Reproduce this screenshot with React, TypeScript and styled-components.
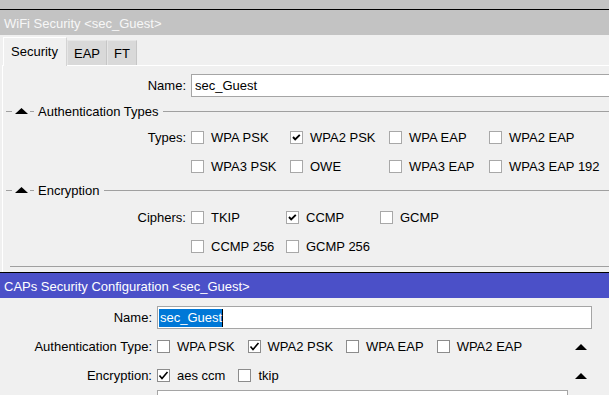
import React from "react";
import styled, { createGlobalStyle } from "styled-components";

const GlobalStyle = createGlobalStyle`
  html, body {
    margin: 0;
    padding: 0;
  }
  body {
    background: #f0f0f0;
    font-family: "Liberation Sans", Arial, sans-serif;
    font-size: 13px;
    color: #000;
  }
`;

const Screen = styled.div`
  width: 609px;
  height: 395px;
  overflow: hidden;
  background: #f0f0f0;
  display: flex;
  flex-direction: column;
`;

const TopStrip = styled.div`
  flex: none;
  height: 9px;
  background: #c3c3c3;
  border-bottom: 1px solid #000;
`;

const TitleBar = styled.div<{ $focused?: boolean }>`
  flex: none;
  height: 25px;
  box-sizing: border-box;
  padding: 3px 0 0 4px;
  line-height: 22px;
  white-space: nowrap;
  color: ${(p) => (p.$focused ? "#ffffff" : "#f7f7f7")};
  background: ${(p) => (p.$focused ? "#4b50c8" : "#c3c3c3")};
`;

const TabStrip = styled.div`
  flex: none;
  height: 30px;
  padding-left: 3px;
  display: flex;
  align-items: flex-end;
`;

const Tab = styled.div<{ $active?: boolean }>`
  position: relative;
  z-index: 1;
  box-sizing: border-box;
  display: flex;
  align-items: center;
  height: ${(p) => (p.$active ? "29px" : "25px")};
  margin-bottom: ${(p) => (p.$active ? "-1px" : "0")};
  padding: ${(p) => (p.$active ? "0 8px 2px 7px" : "0 6px")};
  background: ${(p) => (p.$active ? "#f0f0f0" : "#d9d9d9")};
  border-top: 1px solid ${(p) => (p.$active ? "#ffffff" : "#e6e6e6")};
  border-left: 1px solid ${(p) => (p.$active ? "#ffffff" : "#e6e6e6")};
  border-right: 1px solid ${(p) => (p.$active ? "#d4d4d4" : "#c6c6c6")};
`;

const Panel = styled.div`
  flex: none;
  margin-left: 2px;
  border-left: 1px solid #ffffff;
  border-top: 1px solid #ffffff;
  padding: 8px 0 5px;
  display: flex;
  flex-direction: column;
`;

const FieldRow = styled.div<{ $gap?: number }>`
  display: flex;
  align-items: center;
  height: ${(p) => (p.$gap ? `${p.$gap}px` : "23px")};
  white-space: nowrap;
`;

const FieldLabel = styled.div<{ $width: number }>`
  flex: none;
  width: ${(p) => p.$width}px;
  margin-right: 5px;
  text-align: right;
`;

const TextInput = styled.div<{ $width?: number; $open?: boolean }>`
  box-sizing: border-box;
  height: 23px;
  line-height: 21px;
  padding-left: ${(p) => (p.$open ? "3px" : "1px")};
  background: #ffffff;
  border: 1px solid #a5a5a5;
  ${(p) => (p.$open ? "border-right: none; flex: 1;" : "")}
  ${(p) => (p.$width ? `width: ${p.$width}px; flex: none;` : "")}
`;

const Selected = styled.span`
  display: inline-block;
  line-height: 18px;
  padding-left: 1px;
  background: #0078d7;
  color: #ffffff;
  border-right: 1px solid #000;
`;

const SectionHeader = styled.div<{ $top: number }>`
  display: flex;
  align-items: center;
  height: 14px;
  margin-top: ${(p) => p.$top}px;
  padding-left: 3px;
  white-space: nowrap;
`;

const HeaderDash = styled.span<{ $w: number }>`
  flex: none;
  width: ${(p) => p.$w}px;
  height: 1px;
  background: #a0a0a0;
`;

const HeaderTitle = styled.span`
  margin: 0 5px 0 4px;
`;

const HeaderRule = styled.span`
  flex: 1;
  height: 1px;
  background: #a0a0a0;
`;

const ArrowIcon = styled.svg`
  flex: none;
  display: block;
`;

const OptionGrid = styled.div<{ $cols: string; $top: number }>`
  display: grid;
  grid-template-columns: ${(p) => p.$cols};
  grid-auto-rows: 29px;
  align-items: center;
  margin-top: ${(p) => p.$top}px;
  white-space: nowrap;
`;

const GridLabel = styled.div`
  text-align: right;
  padding-right: 5px;
`;

const Option = styled.label`
  display: flex;
  align-items: center;
  gap: 7px;
  white-space: nowrap;
`;

const Box = styled.span<{ $dark?: boolean }>`
  flex: none;
  box-sizing: border-box;
  width: 13px;
  height: 13px;
  background: #ffffff;
  border: 1px solid ${(p) => (p.$dark ? "#8c8c8c" : "#a8a8a8")};
  display: flex;
  align-items: center;
  justify-content: center;
`;

const Separator = styled.div`
  height: 1px;
  margin: 5px 0 0 7px;
  background: #a0a0a0;
`;

const CapsWindow = styled.div`
  flex: 1;
  border-top: 1px solid #000;
  display: flex;
  flex-direction: column;
`;

const CapsBody = styled.div`
  padding-top: 8px;
  display: flex;
  flex-direction: column;
`;

const OptionRow = styled.div<{ $top?: number }>`
  display: flex;
  align-items: center;
  height: 29px;
  margin-top: ${(p) => p.$top ?? 0}px;
  white-space: nowrap;
`;

const OptionList = styled.div`
  display: flex;
  align-items: center;
  gap: 13px;
`;

const RowToggle = styled.span`
  margin-left: auto;
  margin-right: 22px;
  display: flex;
`;

const Arrow = ({ w = 13 }: { w?: number }) => (
  <ArrowIcon width={w} height="6" viewBox={`0 0 ${w} 6`}>
    <polygon points={`0,6 ${w / 2},0 ${w},6`} fill="#000" />
  </ArrowIcon>
);

const Check = ({ checked, dark }: { checked?: boolean; dark?: boolean }) => (
  <Box $dark={dark}>
    {checked && (
      <svg width="11" height="11" viewBox="0 0 11 11">
        {dark ? (
          <polyline points="1.5,5.5 4,8.5 9.5,2" fill="none" stroke="#000" strokeWidth="1.6" />
        ) : (
          <polyline points="2,5 4.2,7.4 8.8,2.8" fill="none" stroke="#000" strokeWidth="1.9" />
        )}
      </svg>
    )}
  </Box>
);

const Opt = ({ text, checked, dark }: { text: string; checked?: boolean; dark?: boolean }) => (
  <Option>
    <Check checked={checked} dark={dark} />
    <span>{text}</span>
  </Option>
);

const Header = ({ title, top }: { title: string; top: number }) => (
  <SectionHeader $top={top}>
    <HeaderDash $w={6} />
    <span style={{ margin: "0 2px 0 3px", display: "flex" }}>
      <Arrow />
    </span>
    <HeaderDash $w={4} />
    <HeaderTitle>{title}</HeaderTitle>
    <HeaderRule />
  </SectionHeader>
);

export default function App() {
  return (
    <>
      <GlobalStyle />
      <Screen>
        <TopStrip />
        <TitleBar>WiFi Security &lt;sec_Guest&gt;</TitleBar>
        <TabStrip>
          <Tab $active>Security</Tab>
          <Tab>EAP</Tab>
          <Tab>FT</Tab>
        </TabStrip>
        <Panel>
          <FieldRow>
            <FieldLabel $width={183}>Name:</FieldLabel>
            <TextInput $open>sec_Guest</TextInput>
          </FieldRow>

          <Header title="Authentication Types" top={7} />
          <OptionGrid $cols="188px 99px 99px 100px auto" $top={5}>
            <GridLabel>Types:</GridLabel>
            <Opt text="WPA PSK" />
            <Opt text="WPA2 PSK" checked />
            <Opt text="WPA EAP" />
            <Opt text="WPA2 EAP" />
            <GridLabel />
            <Opt text="WPA3 PSK" />
            <Opt text="OWE" />
            <Opt text="WPA3 EAP" />
            <Opt text="WPA3 EAP 192" />
          </OptionGrid>

          <Header title="Encryption" top={2} />
          <OptionGrid $cols="188px 95px 94px auto" $top={6}>
            <GridLabel>Ciphers:</GridLabel>
            <Opt text="TKIP" />
            <Opt text="CCMP" checked />
            <Opt text="GCMP" />
            <GridLabel />
            <Opt text="CCMP 256" />
            <Opt text="GCMP 256" />
          </OptionGrid>

          <Separator />
        </Panel>

        <CapsWindow>
          <TitleBar $focused>CAPs Security Configuration &lt;sec_Guest&gt;</TitleBar>
          <CapsBody>
            <FieldRow>
              <FieldLabel $width={152}>Name:</FieldLabel>
              <TextInput $width={435}>
                <Selected>sec_Guest</Selected>
              </TextInput>
            </FieldRow>
            <OptionRow $top={3}>
              <FieldLabel $width={152}>Authentication Type:</FieldLabel>
              <OptionList>
                <Opt text="WPA PSK" dark />
                <Opt text="WPA2 PSK" checked dark />
                <Opt text="WPA EAP" dark />
                <Opt text="WPA2 EAP" dark />
              </OptionList>
              <RowToggle>
                <Arrow w={12} />
              </RowToggle>
            </OptionRow>
            <OptionRow>
              <FieldLabel $width={152}>Encryption:</FieldLabel>
              <OptionList>
                <Opt text="aes ccm" checked dark />
                <Opt text="tkip" dark />
              </OptionList>
              <RowToggle>
                <Arrow w={12} />
              </RowToggle>
            </OptionRow>
            <FieldRow>
              <FieldLabel $width={152} />
              <TextInput $width={411} />
            </FieldRow>
          </CapsBody>
        </CapsWindow>
      </Screen>
    </>
  );
}
